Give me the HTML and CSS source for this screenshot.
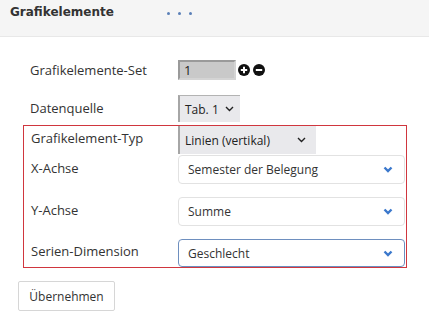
FILE: index.html
```html
<!DOCTYPE html>
<html lang="de">
<head>
    <meta charset="UTF-8">
    <title>Grafikelemente</title>
    <link rel="stylesheet" href="styles.css">
</head>
<body>
    <div class="panel-head">
        <span class="panel-title">Grafikelemente</span>
        <span class="dots"><i></i><i></i><i></i></span>
    </div>
    <div class="form">
        <div class="row row-set">
            <label class="lbl">Grafikelemente-Set</label>
            <div class="num-input">1</div>
            <span class="round-btn">
                <svg width="12" height="12" viewBox="0 0 12 12"><circle cx="6" cy="6" r="6" fill="#111"/><path d="M2.8 6h6.4M6 2.8v6.4" stroke="#fff" stroke-width="2"/></svg>
            </span>
            <span class="round-btn">
                <svg width="12" height="12" viewBox="0 0 12 12"><circle cx="6" cy="6" r="6" fill="#111"/><path d="M2.8 6h6.4" stroke="#fff" stroke-width="2"/></svg>
            </span>
        </div>
        <div class="row row-source">
            <label class="lbl">Datenquelle</label>
            <div class="native-select small">Tab. 1
                <svg class="caret" width="9" height="6" viewBox="0 0 9 6"><path d="M1 1l3.5 3.5L8 1" fill="none" stroke="#222" stroke-width="1.4"/></svg>
            </div>
        </div>
        <div class="marked">
            <div class="row row-type">
                <label class="lbl">Grafikelement-Typ</label>
                <div class="native-select wide">Linien (vertikal)
                    <svg class="caret" width="9" height="6" viewBox="0 0 9 6"><path d="M1 1l3.5 3.5L8 1" fill="none" stroke="#222" stroke-width="1.4"/></svg>
                </div>
            </div>
            <div class="row row-x">
                <label class="lbl">X-Achse</label>
                <div class="fancy-select">Semester der Belegung
                    <svg class="chev" width="10" height="7" viewBox="0 0 10 7"><path d="M1.5 1.5L5 5l3.5-3.5" fill="none" stroke="#3b78cc" stroke-width="2.4"/></svg>
                </div>
            </div>
            <div class="row row-y">
                <label class="lbl">Y-Achse</label>
                <div class="fancy-select">Summe
                    <svg class="chev" width="10" height="7" viewBox="0 0 10 7"><path d="M1.5 1.5L5 5l3.5-3.5" fill="none" stroke="#3b78cc" stroke-width="2.4"/></svg>
                </div>
            </div>
            <div class="row row-series">
                <label class="lbl">Serien-Dimension</label>
                <div class="fancy-select focused">Geschlecht
                    <svg class="chev" width="10" height="7" viewBox="0 0 10 7"><path d="M1.5 1.5L5 5l3.5-3.5" fill="none" stroke="#3b78cc" stroke-width="2.4"/></svg>
                </div>
            </div>
        </div>
        <button class="apply-btn">Übernehmen</button>
    </div>
</body>
</html>
```

FILE: styles.css
```css
body {
    margin: 0;
    background: #fff;
    color: #333;
    font-family: "Open Sans", "Noto Sans", sans-serif;
    font-size: 13px;
}
.panel-head {
    height: 36px;
    background: #f5f5f5;
    border-bottom: 1px solid #e8e8e8;
    display: flex;
    align-items: flex-start;
    padding-left: 10px;
}
.panel-title {
    font-family: "DejaVu Sans", sans-serif;
    font-weight: bold;
    font-size: 12px;
    color: #333;
    margin-top: 5px;
}
.dots {
    display: flex;
    gap: 8px;
    margin-left: 53px;
    margin-top: 12px;
}
.dots i {
    width: 3px;
    height: 3px;
    border-radius: 50%;
    background: #5b80b8;
}
.form {
    padding-top: 23px;
}
.row {
    display: flex;
    align-items: center;
}
.lbl {
    width: 148px;
    flex: none;
}
.row-set, .row-source {
    padding-left: 30px;
}
.row-set {
    height: 20px;
}
.row-source .lbl {
    margin-bottom: 2px;
}
.num-input {
    width: 50px;
    height: 16px;
    line-height: 17px;
    background: #c9c9c9;
    border-top: 2px solid #9a9a9a;
    border-left: 2px solid #9a9a9a;
    border-right: 2px solid #d4d4d4;
    border-bottom: 2px solid #d4d4d4;
    padding-left: 4px;
    color: #222;
}
.round-btn {
    display: flex;
    margin-left: 2px;
}
.round-btn + .round-btn {
    margin-left: 3px;
}
.row-source {
    margin-top: 15px;
    height: 27px;
}
.native-select {
    height: 27px;
    box-sizing: border-box;
    background: #e9e9ec;
    border-top: 1px solid #b3b3b3;
    border-left: 2px solid #a6a6a6;
    display: flex;
    align-items: center;
    padding-left: 5px;
    color: #222;
    font-size: 12px;
    white-space: nowrap;
    flex: none;
}
.native-select.small {
    width: 62px;
}
.native-select.wide {
    width: 138px;
    height: 28px;
    border-top: none;
}
.caret {
    margin-left: auto;
    margin-right: 10px;
    flex: none;
}
.native-select.small .caret {
    margin-right: 6px;
}
.marked {
    margin-top: 3px;
    margin-left: 23px;
    width: 384px;
    box-sizing: border-box;
    border: 1px solid #d0363e;
    padding: 0 1px 0 7px;
}
.marked .lbl {
    width: 147px;
    margin-bottom: 4px;
}
.row-type {
    height: 28px;
}
.row-type .lbl {
    margin-bottom: 5px;
}
.row-x {
    margin-top: 1px;
    height: 29px;
}
.row-y {
    margin-top: 13px;
    height: 29px;
}
.row-series {
    margin-top: 13px;
    height: 28px;
}
.fancy-select {
    width: 227px;
    height: 100%;
    box-sizing: border-box;
    border: 1px solid #e2e2e2;
    border-radius: 4px;
    display: flex;
    align-items: center;
    padding-left: 9px;
    color: #333;
    font-size: 12px;
}
.fancy-select.focused {
    border-color: #6e8fbf;
}
.chev {
    margin-left: auto;
    margin-right: 11px;
}
.apply-btn {
    margin: 13px 0 0 18px;
    width: 97px;
    height: 30px;
    background: #fff;
    border: 1px solid #d6d6d6;
    border-radius: 2px;
    font-family: "Open Sans", "Noto Sans", sans-serif;
    font-size: 12px;
    color: #333;
    padding: 0;
}
```
